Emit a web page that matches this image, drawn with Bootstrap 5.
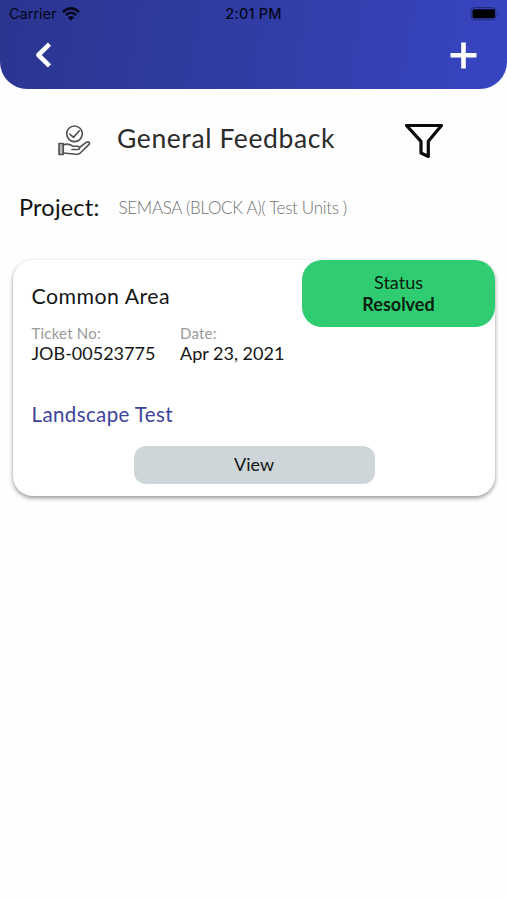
<!DOCTYPE html>
<html lang="en">
<head>
<meta charset="utf-8">
<meta name="viewport" content="width=device-width, initial-scale=1">
<title>General Feedback</title>
<link href="https://cdn.jsdelivr.net/npm/bootstrap@5.3.0/dist/css/bootstrap.min.css" rel="stylesheet">
<style>
body { font-family: Lato, "Liberation Sans", sans-serif; color: #161616; background: #fefefe; line-height: 1.2; min-height: 100vh; }
.app-header { height: 89px; background: linear-gradient(100deg, #2b3590 0%, #303ca2 45%, #3845c2 100%); border-radius: 0 0 27px 27px; }
.status-bar { height: 28px; padding: 0 7px 0 9px; font: 14.5px/28px Inter, sans-serif; color: #05071c; }
.status-bar .clock { font-weight: 500; letter-spacing: .2px; }
.wifi { margin-left: 5px; margin-top: -1px; }
.nav-bar { height: 54px; padding: 0 30px 0 34px; }
.title-row { height: 60px; margin-top: 20px; padding-left: 57px; padding-right: 63px; }
.page-title { font-size: 26.5px; margin-left: 26px; color: #2b2b2b; letter-spacing: .6px; }
.project-row { padding: 24px 20px 0 19px; height: 90px; }
.project-label { font-size: 23.5px; letter-spacing: .2px; color: #111; }
.project-name { font-size: 17px; font-weight: 300; color: #707070; margin-left: 19px; letter-spacing: -.32px; padding-top: 5px; }
.ticket { margin: .5px 12px 0 13px; height: 236.5px; border-radius: 20px; padding: 0 0 0 18.5px; box-shadow: 0 2px 4px rgba(0,0,0,.42); background: #fff; }
.ticket-title { font-size: 21.3px; padding-top: 24.5px; letter-spacing: .48px; }
.ticket-status { width: 193px; height: 67px; border-radius: 20px; background: #2fcc71; color: #07200f; font-size: 18px; line-height: 22px; }
.meta-row { margin-top: -3px; }
.meta-label { font-size: 15px; line-height: 18px; color: #999; letter-spacing: .2px; }
.meta-value { font-size: 18px; line-height: 22px; }
.meta-ticket { width: 148.5px; }
.ticket-subject { font-size: 20.5px; line-height: 24px; color: #3d439b; margin-top: 38px; letter-spacing: .38px; }
.view-btn { width: 241px; height: 38px; margin: 20px 0 0 102px; border-radius: 12px; background: #cfd6d9; color: #161616; font-size: 18px; border: 0; }
</style>
</head>
<body>
<header class="app-header">
  <div class="status-bar d-flex justify-content-between align-items-center position-relative">
    <div class="d-flex align-items-center"><span class="carrier">Carrier</span>
      <svg class="wifi" width="18" height="14" viewBox="0 0 18 14" fill="none" stroke="#05071c" stroke-width="2.5"><path d="M.9 5.1Q9-2.3 17.1 5.1M3.8 8.1Q9 3.3 14.2 8.1"/><path d="M5.8 10.4Q9 7.6 12.2 10.4L9 13.6Z" fill="#05071c" stroke="none"/></svg>
    </div>
    <span class="clock position-absolute start-50 translate-middle-x">2:01 PM</span>
    <svg width="30" height="14" viewBox="0 0 30 14"><rect x="1" y=".6" width="25" height="12.2" rx="3.6" fill="none" stroke="#202978"/><rect x="2.5" y="2.3" width="22.5" height="9" rx="2" fill="#000"/><path d="M28 4.7q1.7 2 0 4z" fill="#202978"/></svg>
  </div>
  <div class="nav-bar d-flex justify-content-between align-items-center">
    <svg width="19" height="28" viewBox="0 0 19 28" fill="none" stroke="#fff" stroke-width="4.6" stroke-linejoin="round"><path d="M15.5 3.2L4.4 14l11.1 10.8"/></svg>
    <svg width="27" height="27" viewBox="0 0 27 27" stroke="#fff" stroke-width="4.6"><path d="M13.5.5v26M.5 13.2h26"/></svg>
  </div>
</header>
<main>
  <div class="title-row d-flex align-items-center">
    <svg class="mt-1" width="34" height="34" viewBox="0 0 34 34" fill="none" stroke="#505050" stroke-width="1.6" stroke-linejoin="round" stroke-linecap="round"><circle cx="17.5" cy="9.8" r="7.8"/><path d="M12.7 10l3.8 3.4 5.8-6.6"/><path d="M2 19.5h4.2v11H2z" fill="#bbb"/><path d="M6.2 21c4-1.8 7-.6 9.5 1.2h5.2c2.2.2 2.2 3.2 0 3.3h-6M22.5 23.5l7-5.3c2.5-1 3.9.8 2.3 2.4l-8.3 8.2c-1.4 1.2-3 1.5-4.7 1.4L6.2 29"/></svg>
    <span class="page-title text-nowrap">General Feedback</span>
    <svg class="ms-auto mt-1" width="39" height="36" viewBox="0 0 39 36" fill="none" stroke="#0b0b0b" stroke-width="3.2" stroke-linejoin="round"><path d="M1.5 2.5h35L23.3 18.3v15.2l-7.3-3.5V18.3z"/></svg>
  </div>
  <div class="project-row d-flex align-items-start">
    <span class="project-label">Project:</span>
    <span class="project-name text-nowrap">SEMASA (BLOCK A)( Test Units )</span>
  </div>
  <section class="ticket">
    <div class="d-flex justify-content-between align-items-start">
      <div class="ticket-title">Common Area</div>
      <div class="ticket-status d-flex flex-column align-items-center justify-content-center"><span>Status</span><b class="resolved">Resolved</b></div>
    </div>
    <div class="meta-row d-flex">
      <div class="meta-ticket"><div class="meta-label">Ticket No:</div><div class="meta-value">JOB-00523775</div></div>
      <div><div class="meta-label">Date:</div><div class="meta-value">Apr 23, 2021</div></div>
    </div>
    <div class="ticket-subject">Landscape Test</div>
    <button type="button" class="view-btn btn d-block p-0">View</button>
  </section>
</main>
<script src="https://cdn.jsdelivr.net/npm/bootstrap@5.3.0/dist/js/bootstrap.bundle.min.js"></script>
</body>
</html>
